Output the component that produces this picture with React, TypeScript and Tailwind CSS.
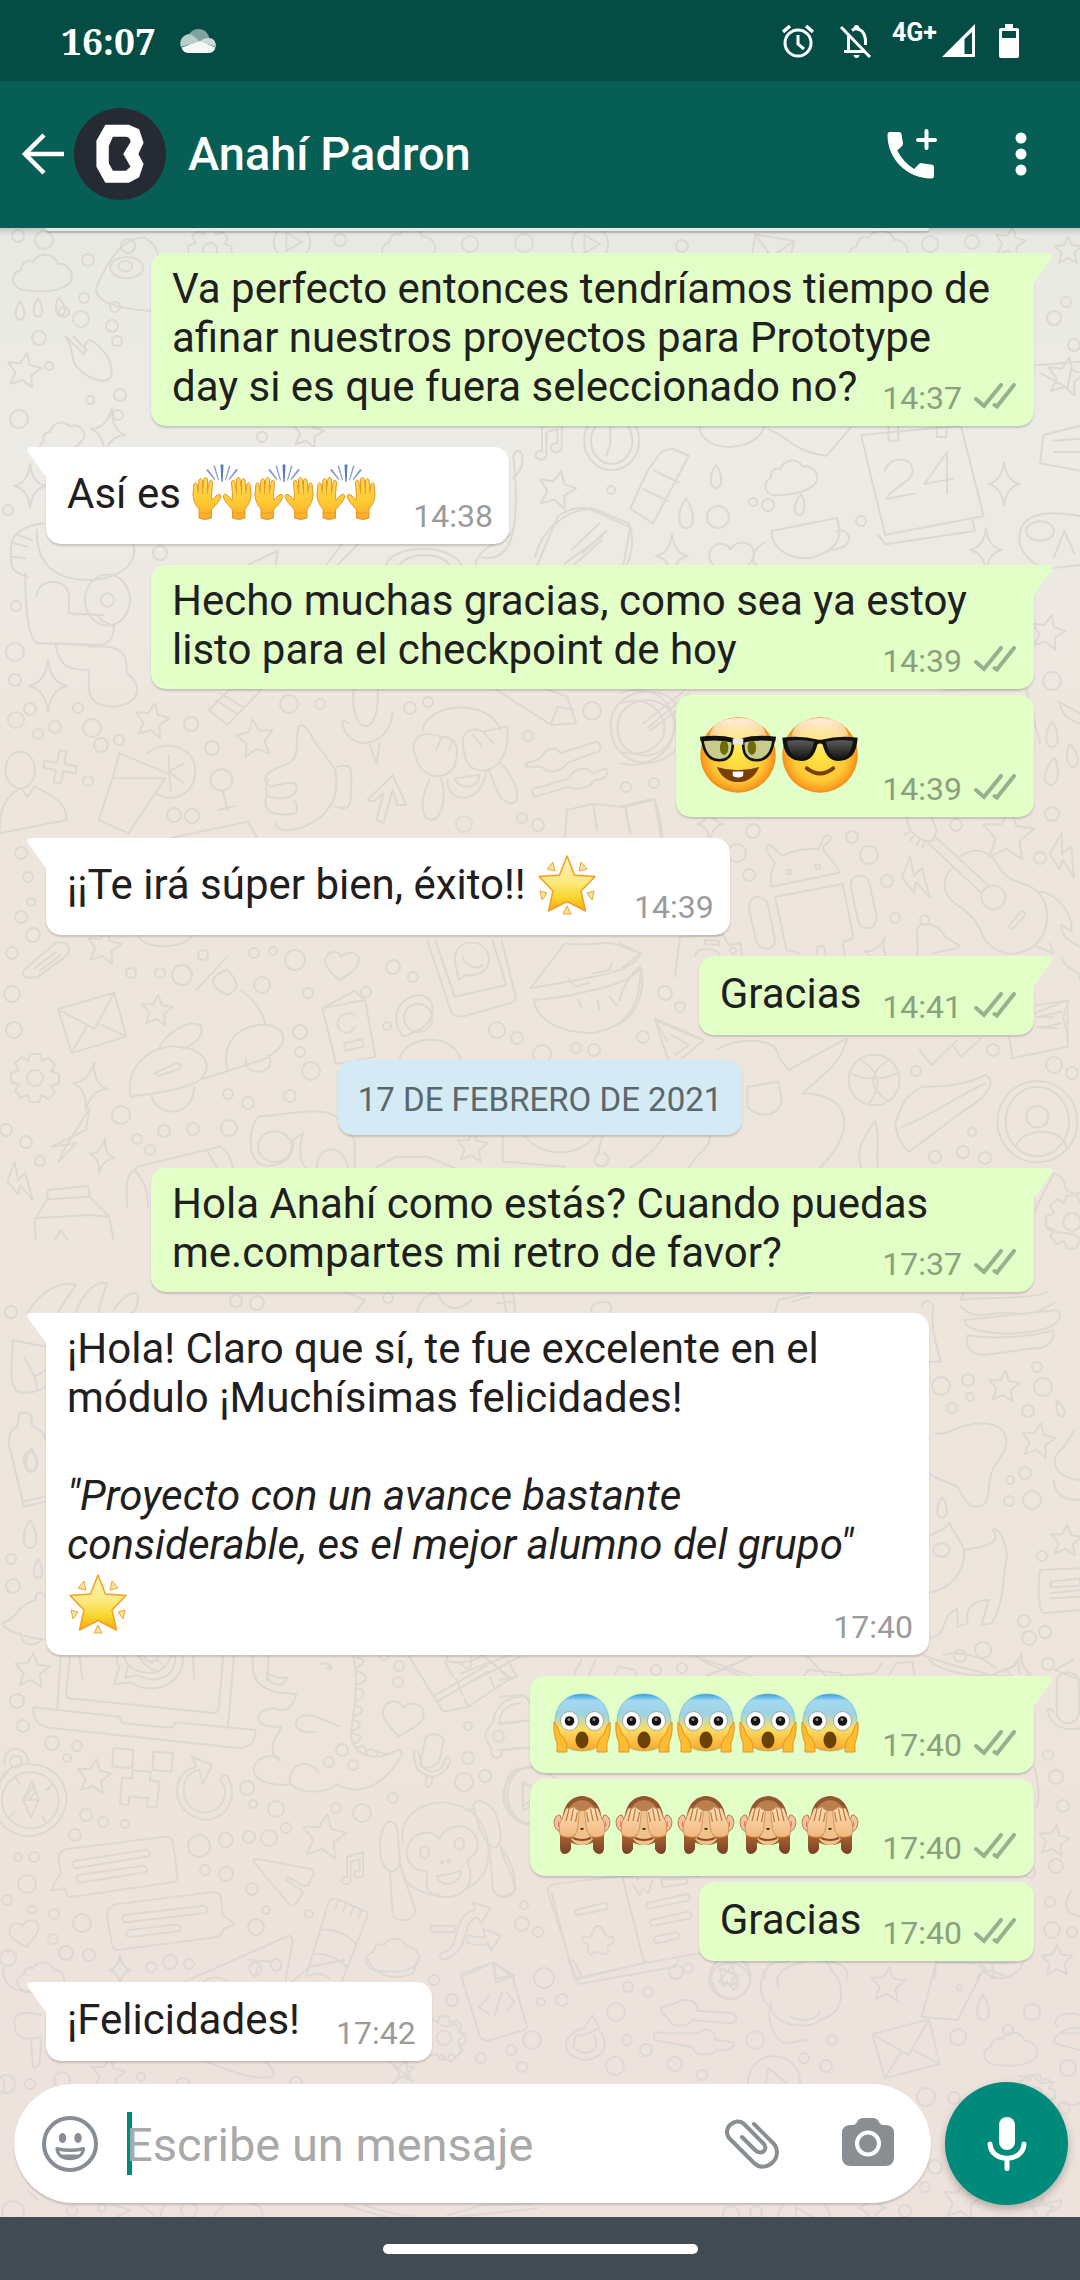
import type { ReactNode } from "react";

/* ---------- Wallpaper ---------- */

type Frame = [ox: number, oy: number, sx: number, sy: number];

const STAR = "M0 -17 L5 -6 L17 -5 L8 4 L11 16 L0 10 L-11 16 L-8 4 L-17 -5 L-5 -6Z";
const SPARK = "M0 -22 Q2 -3 16 0 Q2 3 0 22 Q-2 3 -16 0 Q-2 -3 0 -22Z";
const CLOUD = "M-20 16 C-34 14 -34 -2 -23 -4 C-22 -14 -14 -14 -11 -12 C-6 -22 10 -22 14 -10 C26 -12 34 6 22 12 C12 18 -6 18 -20 16Z";
const HEART = "M-4 17 C-12 8 -22 -2 -17 -10 C-12 -18 -2 -16 0 -9 C8 -17 20 -12 19 -3 C18 6 6 10 -4 17Z";
const DROP = "M0 -12 C6 -4 8 10 0 11 C-8 10 -6 -4 0 -12Z";
const BOLT = "M-6 -20 L-14 2 L-2 16 L0 6 L14 22 L6 -8 L-2 0Z";
const PLUS = "M-4 -18 H4 V-4 H18 V4 H4 V18 H-4 V4 H-18 V-4 H-4Z";
const NOTE = "M-6 14 a5 4 0 1 1 -4 -4 V-12 L8 -18 V6 a5 4 0 1 1 -4 -3 V-10 L-6 -7Z";
const GEAR = "M-5 -24 H5 L7 -17 L14 -20 L20 -13 L16 -7 L24 -4 V5 L16 8 L20 15 L13 21 L7 17 L4 24 H-5 L-7 17 L-14 20 L-20 13 L-16 7 L-24 4 V-5 L-16 -8 L-20 -15 L-13 -21 L-7 -17Z M8 0 A8 8 0 1 1 -8 0 A8 8 0 1 1 8 0Z";
const MAIL = "M-36 -18 L28 -30 L36 20 L-26 32Z M-36 -18 L2 8 L28 -30 M-26 32 L-6 4 M36 20 L8 3";
const PLAY = "M26 0 A26 26 0 1 1 -26 0 A26 26 0 1 1 26 0Z M-8 -13 L14 0 L-8 13Z";

const motifs: [string, number, number, number, number][] = [
  [CLOUD, 44, 274, 1, 0], [STAR, 24, 370, 1, 10], [SPARK, 108, 432, 1.1, 10], [CLOUD, 62, 438, 0.8, -20],
  [STAR, 308, 432, 0.9, 12], [STAR, 557, 489, 1.1, 14], [SPARK, 30, 486, 1, 0], [SPARK, 672, 556, 1, 0],
  [CLOUD, 792, 478, 0.9, -10], [DROP, 716, 477, 1, 0], [DROP, 800, 505, 0.9, 8], [DROP, 686, 514, 1.3, 0],
  [SPARK, 1004, 484, 1, 0], [SPARK, 986, 550, 1, 0], [NOTE, 553, 440, 1.1, 0], [HEART, 732, 560, 1.2, -10],
  [SPARK, 48, 686, 1.2, 0], [STAR, 152, 720, 1, 10], [STAR, 255, 738, 1.1, -8], [PLUS, 60, 767, 0.9, 10],
  [DROP, 20, 311, 0.8, 0], [DROP, 38, 308, 0.8, 0], [DROP, 60, 307, 0.8, -10], [STAR, 1048, 632, 1, 12],
  [STAR, 1008, 834, 1.5, 5], [BOLT, 916, 876, 1, 0], [BOLT, 1064, 854, 1, 10], [DROP, 1052, 735, 1.1, 0],
  [DROP, 1072, 756, 1, -12], [DROP, 1052, 772, 1.2, 10], [SPARK, 878, 956, 0.9, 20], [SPARK, 710, 824, 0.8, 0],
  [STAR, 104, 946, 1, 10], [STAR, 157, 1010, 0.9, 5], [HEART, 342, 965, 0.9, -5], [GEAR, 35, 1078, 1, 0],
  [SPARK, 90, 1086, 1.1, 10], [SPARK, 102, 1156, 0.8, 10], [MAIL, 92, 1022, 0.9, -6], [BOLT, 20, 1180, 0.9, 0],
  [STAR, 472, 1146, 0.9, 5], [STAR, 1004, 1386, 0.9, 6], [STAR, 1038, 1440, 1, 10], [STAR, 1066, 1540, 0.9, 5],
  [DROP, 1060, 1409, 0.7, -20], [DROP, 942, 1508, 0.9, 0], [DROP, 30, 1535, 1.2, 0], [DROP, 38, 1569, 0.8, 0],
  [DROP, 31, 1460, 1, 0], [STAR, 32, 1670, 1, 5], [STAR, 94, 1776, 1, 8], [STAR, 324, 1836, 1.3, 8],
  [HEART, 403, 1718, 1.1, 0], [HEART, 25, 1933, 0.8, -20], [CLOUD, 394, 1956, 0.9, 0], [CLOUD, 42, 1978, 0.8, 0],
  [NOTE, 356, 1868, 0.9, 0], [STAR, 1054, 1840, 0.9, 10], [STAR, 1057, 1960, 0.9, 0], [SPARK, 1018, 1672, 0.9, 10],
  [PLAY, 532, 1796, 1.1, 0], [STAR, 888, 1984, 1, 5], [CLOUD, 1012, 2050, 0.9, 0], [MAIL, 906, 2048, 0.9, -4],
  [GEAR, 444, 2038, 0.9, 0], [DROP, 983, 2008, 1.1, 0], [PLAY, 730, 1978, 0.8, 40], [STAR, 108, 2074, 1, 8],
  [GEAR, 1036, 2094, 0.8, 0], [SPARK, 872, 2208, 0.9, 0], [STAR, 962, 2200, 1.1, 8], [CLOUD, 240, 2212, 0.8, 0],
  [PLAY, 774, 2082, 1, 10], [PLAY, 804, 2220, 1, 0], [SPARK, 120, 1970, 0.7, 0], [STAR, 1042, 2210, 0.7, 0],
  [GEAR, 1072, 1222, 1.1, 0], [STAR, 404, 2070, 0.6, 0],
  [STAR, 1010, 242, 0.9, 12], [GEAR, 210, 250, 0.9, 0], [PLAY, 292, 242, 0.7, 0], [CLOUD, 410, 246, 0.9, 0],
  [PLAY, 590, 244, 0.7, 0], [MAIL, 772, 252, 0.6, 20], [CLOUD, 880, 250, 1, 0], [STAR, 1066, 376, 1.1, 10],
  [STAR, 1068, 250, 0.8, 0],
];

const dots: [number, number, number][] = [
  [18, 236, 6], [44, 240, 9], [88, 260, 6], [128, 246, 7], [340, 240, 6], [470, 244, 8], [524, 243, 9], [682, 246, 6], [930, 244, 8], [972, 242, 7],
  [84, 298, 5], [64, 312, 5], [81, 319, 8], [115, 307, 5], [112, 326, 6], [39, 338, 7], [117, 341, 5], [49, 366, 4], [120, 395, 6], [90, 400, 4], [19, 419, 9], [118, 415, 5],
  [1054, 318, 7], [1074, 345, 6], [1066, 302, 5], [8, 510, 5], [160, 553, 7], [262, 437, 5], [611, 490, 4], [753, 502, 4], [768, 505, 6], [718, 517, 11], [861, 521, 5],
  [16, 606, 5], [15, 652, 9], [15, 680, 6], [16, 720, 8], [55, 727, 6], [38, 734, 5], [92, 728, 9], [78, 708, 5], [30, 709, 6], [101, 745, 7], [119, 740, 5], [191, 724, 7], [212, 748, 7], [289, 704, 9], [320, 704, 5], [410, 708, 6], [428, 702, 5], [592, 711, 9], [528, 736, 5], [88, 781, 5],
  [174, 815, 7], [192, 816, 7], [464, 824, 8], [522, 818, 5], [538, 825, 6], [626, 787, 5], [654, 783, 5], [1052, 681, 9], [753, 831, 7], [737, 853, 9], [749, 875, 6], [852, 837, 6], [869, 855, 9], [887, 881, 6], [895, 918, 5], [956, 825, 6], [1040, 858, 6], [1052, 814, 7], [665, 993, 7], [680, 1007, 5],
  [21, 853, 6], [28, 877, 5], [31, 902, 4], [21, 917, 6], [33, 935, 7],
  [12, 953, 6], [12, 994, 8], [14, 1030, 8], [131, 973, 5], [160, 973, 5], [182, 975, 10], [262, 985, 8], [295, 960, 10], [203, 955, 5], [254, 953, 5], [273, 951, 4], [300, 1032, 7], [308, 993, 5], [366, 992, 5], [393, 967, 7], [413, 977, 5], [418, 1018, 14], [497, 1030, 8], [517, 1038, 6], [387, 1026, 4], [300, 1052, 5], [311, 1071, 9], [121, 1115, 9], [228, 1094, 5], [248, 1103, 6], [290, 1096, 6], [164, 1131, 6], [193, 1129, 6], [229, 1128, 8], [137, 1139, 5], [26, 1142, 6], [6, 1130, 6], [40, 1161, 5], [150, 1150, 5], [643, 1037, 6], [576, 1048, 5], [594, 1050, 6], [542, 1054, 9], [935, 1157, 6], [963, 1152, 6], [985, 1158, 6], [972, 1132, 4], [916, 1071, 5], [1054, 1065, 8], [1072, 1073, 6], [993, 1050, 6],
  [236, 1301, 6], [257, 1303, 7], [388, 1298, 5], [11, 1312, 6], [941, 1386, 9], [968, 1380, 6], [970, 1397, 4], [952, 1408, 5], [1028, 1411, 6], [1043, 1387, 9], [1037, 1367, 5], [1025, 1473, 6], [1009, 1501, 5], [1032, 1500, 9], [1010, 1480, 4], [1042, 1556, 5], [13, 1586, 7], [11, 1559, 5], [1024, 1621, 6], [1029, 1638, 7], [1045, 1632, 6], [983, 1650, 8], [960, 1656, 6],
  [17, 1701, 7], [23, 1726, 6], [52, 1743, 7], [77, 1746, 5], [67, 1758, 4], [86, 1815, 6], [103, 1822, 5], [125, 1824, 4], [75, 1835, 6], [18, 1857, 4], [34, 1857, 5], [27, 1884, 9], [7, 1900, 5], [32, 1910, 4], [54, 1914, 5], [82, 1923, 9], [53, 1939, 5], [8, 1958, 8], [66, 1953, 7], [89, 1955, 6], [151, 1967, 5], [170, 1962, 7], [189, 1964, 5], [199, 1846, 11], [226, 1840, 7], [249, 1837, 6], [269, 1838, 8], [286, 1828, 5], [276, 1809, 8], [253, 1804, 4], [247, 1788, 7], [205, 1870, 5], [226, 1874, 7], [252, 1889, 6], [256, 1927, 8], [266, 1910, 4], [309, 1914, 4], [336, 1808, 5], [362, 1813, 9], [393, 1798, 5], [329, 1762, 5], [342, 1750, 6], [353, 1765, 5], [464, 1782, 9], [468, 1758, 6], [485, 1776, 6], [468, 1726, 4], [398, 1682, 5], [399, 1666, 5], [384, 1656, 4], [434, 1980, 5],
  [656, 1670, 5], [682, 1668, 5], [1048, 1664, 6], [1048, 1755, 5], [1056, 1777, 7], [1063, 1806, 6], [1056, 1866, 7], [1050, 1902, 5], [1052, 1930, 8], [1072, 1932, 5], [524, 1905, 4], [522, 1924, 7], [538, 1932, 5], [676, 1972, 7], [688, 1968, 5],
  [452, 2000, 6], [544, 1978, 10], [628, 1987, 5], [648, 1992, 5], [541, 2002, 4], [562, 2000, 6], [532, 2040, 9], [511, 2050, 5], [522, 2067, 5], [481, 2058, 5], [616, 2012, 9], [627, 2040, 5], [646, 2050, 6], [615, 2066, 9], [675, 2064, 7], [702, 2075, 5], [755, 2040, 9], [832, 2040, 5], [958, 2037, 8], [1032, 2012, 8], [1068, 2068, 8], [1008, 2030, 5], [804, 2058, 5], [826, 2066, 6],
  [926, 2097, 9], [954, 2098, 6], [935, 2167, 7], [925, 2187, 5], [1064, 2108, 6], [905, 2211, 6], [756, 2212, 6], [731, 2214, 8], [30, 2084, 5], [62, 2080, 8], [6, 2084, 9], [141, 2077, 4], [13, 2212, 11], [72, 2211, 5], [102, 2208, 4], [189, 2210, 8], [183, 2085, 7], [296, 2083, 6],
];

const outlines: { frame: Frame; d: string[] }[] = [
  {
    frame: [0, 230, 0.6888, 0.3763],
    d: [
      "M140 150 C160 70 180 20 210 20 C230 40 235 80 228 120 M160 100 a24 28 0 1 0 48 0 a24 28 0 1 0 -48 0 M172 96 a10 14 0 1 0 20 0 a10 14 0 1 0 -20 0 M140 150 C135 190 170 210 219 215",
      "M95 282 C110 320 100 350 115 370 C130 400 165 420 162 370 C160 330 140 300 130 292 C120 300 125 320 122 330 M95 282 L122 330 M106 282 L126 320",
      "M848 560 a40 78 0 1 0 80 0 a40 78 0 1 0 -80 0 M858 560 a30 62 0 1 0 60 0 a30 62 0 1 0 -60 0 M886 520 V570 L880 600",
      "M975 580 L1000 600 L948 780 L915 740 L940 640 L960 590Z M950 640 L985 670 M935 690 L970 720",
      "M1250 545 L1395 520 L1428 760 L1285 810Z M1275 810 L1285 835 L1415 800 L1412 770 M1290 520 v40 l14 0 v-40 M1360 510 v40 l14 0 v-45",
      "M1285 640 C1290 600 1325 600 1325 640 C1325 670 1290 690 1287 715 L1328 700 M1375 700 V590 L1342 675 L1385 660",
      "M1120 800 L1215 765 C1225 820 1215 850 1180 870 C1150 880 1120 850 1120 800Z M1215 800 C1240 790 1240 850 1205 850 M1110 830 C1090 850 1090 890 1100 890",
      "M780 890 L810 760 C830 735 850 735 860 745 L915 790 L905 890 M830 850 L870 780 M845 860 L880 800",
      "M1480 820 C1480 760 1510 740 1568 760 M1490 800 a20 26 0 1 0 40 0 a20 26 0 1 0 -40 0 M1530 870 L1545 800 L1560 860 M1480 820 C1480 860 1500 890 1520 900 L1568 890",
      "M1568 520 L1515 545 L1510 620 L1568 640 M1530 560 L1568 555 M1530 590 L1568 590",
      "M1500 360 L1568 350 M1510 380 L1550 420 L1555 370",
      "M1015 521 C1020 600 1100 590 1110 521 M1115 530 C1140 540 1150 590 1200 600 L1235 525",
      "M690 890 C700 820 740 840 746 790 M700 870 C730 880 760 850 745 600 C755 560 770 620 745 660",
    ],
  },
  {
    frame: [0, 430, 0.4592, 0.3333],
    d: [
      "M80 300 C80 420 130 450 200 450 C280 440 300 380 290 345 M24 370 C20 320 40 290 95 280 M24 370 C20 420 35 430 60 440 M30 340 L60 350 M38 315 L70 330 M24 380 L56 385 M55 430 C55 520 60 640 85 640 L200 645",
      "M80 500 C80 440 150 440 150 500 V550 L225 555 M150 550 C180 560 215 540 220 570 L248 590 C250 630 230 650 200 645 L120 640",
      "M185 510 a48 75 0 1 0 98 0 a48 75 0 1 0 -98 0 M220 510 a14 20 0 1 0 28 0 a14 20 0 1 0 -28 0",
      "M120 640 C130 720 160 720 195 720 M195 650 C270 640 280 680 275 730 C310 760 310 820 250 830 C190 830 190 790 195 720",
      "M455 840 L500 778 L570 778 L495 885Z M470 810 L515 850 M480 790 L528 830",
      "M770 778 C760 920 830 930 822 778 M745 870 C750 970 850 960 855 845 M745 870 L760 880 M805 945 L820 1000 L827 940",
      "M1080 778 L1200 885 L1255 880 L1235 800 L1190 778 M1200 880 L1215 830 L1250 840",
      "M1330 900 C1320 760 1480 740 1490 880 C1490 1030 1340 1040 1330 900 M1345 900 C1340 790 1460 780 1470 880 C1470 1000 1350 1010 1345 900 M1410 895 L1500 790",
      "M650 890 C670 870 680 940 700 960 L730 1020 C740 1100 720 1130 700 1160 C650 1210 600 1210 600 1180 M650 890 C640 960 660 990 610 1010 C560 1040 580 1060 590 1070 C640 1050 650 1060 645 1080 C640 1110 600 1110 580 1095 C580 1050 580 1060 585 1050 M580 1100 C570 1150 600 1160 645 1150 C650 1120 640 1110 640 1110 M735 1010 C770 1000 765 1020 765 1060 C765 1140 760 1140 730 1130",
      "M245 1045 L360 1045 L280 1210 L215 1170 L245 1045 L260 970 L365 1030 M320 970 C370 920 430 960 425 1030 C420 1100 370 1120 340 1090 M368 1025 L368 975 M368 1025 L400 1000 M368 1025 L400 1060 M368 1025 L372 1080",
      "M458 1050 a24 32 0 1 0 48 0 a24 32 0 1 0 -48 0 M485 1080 L495 1140 M475 1140 L512 1128",
      "M0 1210 C-5 1130 20 1090 45 1075 L60 1100 L75 1070 C120 1100 145 1120 145 1170Z M12 1020 a32 55 0 1 0 64 0 a32 55 0 1 0 -64 0",
      "M800 1110 L855 1035 L885 1125 L865 1125 L855 1080 L835 1180 L820 1170 L835 1090 L815 1115Z",
      "M900 960 C900 900 940 910 960 920 C1000 920 1000 960 990 1010 C970 1050 930 1050 910 1000 L900 960 M1010 960 C1000 900 1030 890 1050 905 L1105 890 C1110 980 1080 1030 1040 1020 C1010 1010 1010 960 1010 960 M920 900 C930 820 1060 800 1090 900 M975 1050 C970 1120 1050 1130 1060 1020 M990 1045 L1045 1035 C1040 1080 1000 1080 990 1045 M935 1050 C910 1120 920 1170 940 1170 C960 1170 975 1100 960 1045 M1065 1020 C1080 1080 1090 1120 1115 1120 C1140 1110 1120 1040 1090 1000 M960 925 L950 960 M985 930 L978 960 M1030 915 L1050 950 M1055 910 L1075 940",
      "M1145 1010 C1140 990 1170 1000 1180 980 C1190 950 1215 950 1220 970 L1300 935 C1315 950 1305 970 1290 970 L1235 1000 C1220 1030 1190 1030 1180 1010Z M1165 1100 C1150 1080 1165 1070 1180 1070 L1240 1045 C1250 1010 1280 1010 1290 1030 L1320 1015 C1330 1040 1310 1050 1295 1050 C1280 1080 1250 1080 1240 1070Z",
      "M1230 1225 L1235 1140 L1290 1122 L1360 1132 L1425 1108 L1440 1225 M1292 1125 L1300 1200 M1362 1135 L1372 1210",
      "M370 1225 L540 1175 L560 1225 M300 1515 C310 1560 400 1560 420 1515",
      "M1165 380 C1180 300 1230 240 1290 235 L1370 280 C1380 320 1380 360 1365 405 M1230 400 L1310 320 M1250 405 L1310 330",
      "M840 405 C860 340 980 340 1005 405 M870 405 C890 365 960 365 980 405 M710 405 L745 342 M735 405 L780 342 M540 405 L605 362 L600 405",
    ],
  },
  {
    frame: [620, 680, 0.3333, 0.3333],
    d: [
      "M455 620 L658 578 C640 530 600 515 610 500 L632 480 C635 465 620 462 612 472 L595 508 C560 505 520 510 487 528 L455 498 C440 490 435 505 445 520 L465 548 C450 580 450 600 455 620Z M500 576 a7 7 0 1 0 14 0 a7 7 0 1 0 -14 0 M586 560 a7 7 0 1 0 14 0 a7 7 0 1 0 -14 0",
      "M465 650 L668 612 L700 770 C700 780 670 780 668 790 L675 828 M465 650 L500 810 L540 820 M590 828 L592 800 L612 798 L618 828",
      "M388 690 C380 640 440 640 445 680 L465 780 C465 815 415 815 408 780Z M692 620 C690 580 740 575 748 610 L770 710 C770 755 720 755 714 720Z",
      "M1020 530 C1060 500 1110 510 1130 550 C1160 610 1200 600 1240 625 C1300 670 1290 760 1240 800 C1180 840 1120 820 1090 770 C1060 700 1040 700 1000 665 C960 630 970 590 1000 562 M1084 652 a36 36 0 1 0 72 0 a36 36 0 1 0 -72 0 M945 470 L1110 620 M925 490 L1085 640 M1170 735 L1200 697 C1210 690 1218 700 1212 710 L1182 742 C1170 750 1165 742 1170 735Z",
      "M860 412 L870 450 C900 480 920 490 940 480 L950 450 L935 412 M852 465 l14 -8 M870 482 l10 -12 M890 495 l8 -14 M908 502 l6 -14",
      "M890 825 C900 790 880 750 900 735 C930 725 960 740 975 770 L1020 798 C1000 815 960 810 940 822 M900 720 a14 14 0 1 0 28 0 a14 14 0 1 0 -28 0",
      "M165 890 L180 770 L310 765 L325 795 L362 790 L365 828 M225 828 C230 800 290 800 300 828 M255 780 L295 782 L298 795 L255 792Z M330 812 a9 9 0 1 0 18 0 a9 9 0 1 0 -18 0",
      "M105 1020 L235 1075 M105 1020 L140 1080 M0 790 L60 820 L0 870 M0 1030 C60 1000 80 900 60 860 C30 880 0 940 0 960",
      "M1260 635 C1310 640 1360 700 1355 755 L1325 735 C1320 770 1360 790 1380 800 M1290 790 L1300 820 L1250 800 M1325 830 C1340 880 1380 860 1380 900",
      "M1250 975 L1345 962 L1330 1010 L1345 1080 M1250 1010 L1300 1012 M1250 1040 L1310 1045",
      "M0 40 C100 0 180 80 160 160 C150 220 80 270 0 250 M0 70 C80 40 150 100 130 170 C100 220 50 230 0 215 M70 130 L190 35 M90 152 L165 95 M0 380 L95 357 C110 360 125 420 125 475 M18 390 L22 410 M25 430 L32 455",
      "M970 30 L1200 28 M1220 30 L1260 190 M1315 65 L1380 100 M1320 75 C1330 110 1350 120 1380 130",
    ],
  },
  {
    frame: [0, 940, 0.6888, 0.3333],
    d: [
      "M35 90 L80 10 C100 0 105 30 95 50 L55 110 C35 120 30 105 35 90Z M50 85 L82 35 M58 92 L88 45",
      "M285 150 L330 50 M330 90 C345 120 350 150 330 165 C305 140 300 110 330 90 M350 150 C370 180 380 210 385 250 M190 470 C180 380 220 310 260 320 C300 330 310 380 290 420 C270 450 220 460 190 470Z M230 330 C240 280 270 240 290 255 C300 280 280 320 265 325 M330 390 C320 300 350 250 390 255 C420 270 420 320 380 360 L290 420 M225 400 L255 370 C265 370 265 385 255 390 L230 408Z M358 355 a18 30 0 1 0 30 -10 M220 465 C225 530 280 540 282 440",
      "M468 205 L515 152 L530 180 L545 350 L488 372Z M468 205 L530 180 M490 250 C490 220 515 210 515 230 M515 260 C510 290 490 280 490 250 M500 310 L525 298 L528 320 L500 332Z",
      "M585 290 C550 190 620 120 628 200 C630 260 600 280 585 290",
      "M620 0 L655 215 C658 230 665 232 675 228 L740 190 C748 185 750 175 748 165 L728 0 M632 0 L660 170 L735 135 L715 0 M660 60 C660 -10 710 -10 710 60 C710 100 685 110 675 105 L666 120 Z M672 50 C675 80 695 90 700 75",
      "M770 145 L820 10 C850 20 870 5 890 10 L930 40 C920 100 860 110 770 145 M775 180 C780 260 840 290 870 275 C920 250 930 170 930 85 C910 130 890 130 875 145 C850 150 840 170 775 180 M825 115 L835 140 L855 130 M862 100 L885 90 L888 70 M840 180 L845 205 M868 180 L870 210 M885 170 L895 195",
      "M950 235 L1022 300 L990 355 M950 235 L970 358 M975 285 L1000 315 L980 345",
      "M580 358 C590 280 660 280 668 358 M1040 330 C1070 290 1130 290 1130 350 L1145 390 L1230 295 C1220 380 1190 410 1165 460 C1230 460 1250 560 1190 684 M1085 440 L1130 425 L1135 480 C1130 540 1095 530 1085 500Z M1250 680 C1240 620 1260 580 1270 540 C1280 600 1270 640 1275 684",
      "M1232 420 a37 76 0 1 0 74 0 a37 76 0 1 0 -74 0 M1250 360 C1280 400 1280 440 1262 490 M1290 360 C1260 400 1260 440 1290 485 M1235 400 C1265 430 1290 410 1305 400",
      "M1300 550 C1310 480 1320 460 1340 440 C1360 440 1400 440 1430 405 C1450 420 1430 480 1400 510 L1320 635 C1310 620 1300 580 1300 550Z M1310 560 C1340 540 1380 480 1430 430",
      "M1448 545 a58 122 0 1 0 116 0 a58 122 0 1 0 -116 0 M1460 545 a46 104 0 1 0 92 0 a46 104 0 1 0 -92 0 M1490 530 a16 32 0 1 0 32 0 a16 32 0 1 0 -32 0 M1475 620 C1485 560 1540 560 1548 620",
      "M375 530 L440 515 C470 510 490 520 495 550 L515 600 V684 M375 530 C360 570 360 640 375 670 C400 690 430 660 425 600 L440 580 C430 640 440 680 445 684 M375 620 a24 46 0 1 0 48 0 a24 46 0 1 0 -48 0 M460 684 C460 610 500 610 505 684",
      "M185 800 C180 700 190 700 200 680 L320 620 C335 640 335 660 338 684 M300 630 L315 684 M195 690 C210 720 215 760 215 800",
      "M70 750 L128 738 L130 770 L158 830 L165 900 M70 750 L68 780 L50 840 L52 900 M50 835 L130 825 L158 830 M130 770 L68 778 M80 900 L88 870 L98 900",
      "M730 585 V665 L820 680 M760 585 C790 660 840 650 865 585 M875 585 L868 640 M870 640 a10 20 0 1 0 6 0",
      "M1385 320 L1395 350 L1425 295 M1335 330 L1352 375 L1390 300 M1465 290 L1470 355 L1550 320 V180 L1502 220 M1510 230 L1540 215 M1510 265 L1540 250",
      "M1500 820 L1530 700 C1560 720 1530 760 1568 760 M1520 840 C1510 900 1560 860 1568 900",
      "M915 684 C950 640 960 600 965 585 M1000 684 C1010 640 1035 620 1030 585 M545 684 L575 650 H620 L660 684 M90 640 L130 505 L125 570 L75 620 L110 610 L85 665Z",
    ],
  },
  {
    frame: [0, 1280, 0.6888, 0.3333],
    d: [
      "M40 98 C60 30 90 0 110 15 C100 50 90 70 85 98 M110 98 C120 40 140 0 155 10 C150 50 140 90 145 98 M165 90 C180 40 205 20 200 60 C200 80 195 98 190 98",
      "M605 98 C610 60 620 40 635 40 C640 60 650 98 670 80 L685 60 M730 36 L735 98 M745 36 L748 98 M720 70 L748 66 M500 36 L530 60 L515 98 M860 98 C850 60 900 50 885 98 M1125 98 L1130 60 L1180 36 M1150 65 L1175 50",
      "M1395 60 L1400 36 M1395 60 C1420 50 1500 60 1520 36 M1395 80 C1420 130 1440 90 1470 100 C1500 110 1520 80 1530 70 M1400 120 L1535 90 C1545 110 1535 140 1510 150 C1470 170 1400 160 1400 120Z M1405 165 C1440 180 1500 170 1530 150 C1530 190 1520 205 1500 205 L1430 225 C1410 225 1400 200 1405 165Z",
      "M1338 80 C1340 55 1355 60 1355 85 C1350 140 1360 200 1366 245 L1348 245",
      "M1358 460 C1380 470 1385 430 1430 430 C1470 440 1465 500 1450 540 C1430 590 1440 640 1430 670 C1410 700 1400 660 1390 620 C1370 600 1350 590 1350 580",
      "M1348 770 C1360 750 1370 755 1378 730 L1390 770 L1400 810 C1430 800 1450 790 1445 760 L1440 750 C1450 740 1460 780 1462 830 C1455 880 1460 960 1440 1030 L1425 1035 L1435 960 C1415 960 1400 980 1405 1030 L1390 1040 V985 C1360 1020 1380 1060 1350 1075 M1355 810 a12 20 0 1 0 24 0 a12 20 0 1 0 -24 0 M1345 940 C1370 930 1400 900 1400 810",
      "M1568 600 C1530 590 1520 540 1545 500 L1560 450 M1530 600 C1530 650 1550 660 1568 660 M1568 865 L1510 870 C1505 940 1510 1000 1515 1000 L1568 990 M1525 905 L1568 895 V918 L1525 922Z M1525 940 L1568 930 M1525 955 L1568 950",
      "M18 180 C20 240 10 300 25 335 C40 345 60 330 66 320 M18 180 L66 200 M35 230 L50 290 L66 270 M50 290 L55 330",
      "M25 440 L28 400 C35 395 45 400 45 410 L47 440 C60 450 64 460 66 480 M25 440 C10 450 12 500 15 510 L35 680 L66 665 M32 665 L66 650 M35 550 C30 510 50 500 55 545 C55 580 40 590 35 550",
      "M66 950 C60 930 50 935 52 960 C20 980 30 1010 3 1030 C10 1060 50 1075 66 1080 M30 1060 C32 1100 50 1100 60 1080",
      "M115 1125 L120 1200 M180 1125 C180 1170 220 1200 240 1160 L250 1125 M200 1125 C210 1150 230 1150 230 1125 M280 1125 L282 1200 M390 1125 L388 1200 M470 1150 C485 1150 480 1170 475 1165 M650 1125 C640 1160 690 1150 700 1125 M670 1180 L740 1125 M690 1200 L755 1130 M700 1125 L745 1200 M1010 1130 L1095 1190 M1090 1130 L1015 1200 M1170 1125 L1200 1190 L1270 1180 L1280 1150 M1340 1125 C1380 1160 1440 1180 1460 1200 M1370 1125 C1390 1110 1430 1130 1445 1165",
    ],
  },
  {
    frame: [0, 1655, 0.3333, 0.3333],
    d: [
      "M182 0 L172 162 M210 0 L198 118 Q198 128 208 130 L640 174 Q654 174 656 160 L670 0 M702 0 L684 214 M100 157 L358 185 Q362 205 376 205 L508 218 Q524 218 524 202 L767 225 Q765 280 715 279 L148 218 Q98 210 100 157Z",
      "M352 0 Q345 15 358 35 L342 88 L392 82 C460 130 560 80 548 0 M370 0 L385 32 L376 68 L412 60 C460 90 530 70 526 0 M412 0 C430 30 470 60 485 42 C498 30 480 18 465 15 L455 25 C440 18 435 5 430 0",
      "M760 0 C745 90 800 118 888 116 C885 150 860 170 840 165 C800 150 770 180 775 192 C780 215 815 215 842 216 C840 240 810 250 820 298 L840 318 M838 310 C800 290 755 320 762 350 C775 390 850 395 870 386 C865 320 930 310 954 350 M870 386 C900 420 980 415 1012 388 C1090 430 1160 380 1205 300 Q1205 280 1190 286 C1140 320 1060 310 1053 240 C1060 160 1080 90 1060 0 M1018 214 L950 186 C890 165 870 215 905 228 Q930 236 948 230 M800 54 Q830 72 862 68 C850 100 805 95 800 54 M962 26 Q985 20 996 42",
      "M1070 10 Q1110 10 1070 40 M1072 48 Q1125 70 1072 88 M1070 98 Q1115 115 1066 140 M1064 150 Q1112 165 1060 185 M1058 192 Q1105 210 1053 230 M1056 236 Q1108 240 1060 268 M1068 280 Q1100 260 1098 300 M1100 290 Q1120 270 1134 304 M1130 286 Q1145 300 1168 296",
      "M340 280 L400 284 L396 340 L337 334Z M460 290 L520 294 L514 350 L458 345Z M398 346 L452 350 L450 376 L478 380 L470 457 L440 455 L444 430 L388 424 L386 450 L360 446 L366 368 L396 370Z",
      "M574 304 L636 330 L608 388 L598 344 C555 350 540 400 560 440 C590 495 680 480 676 400 L663 378 C658 362 678 355 685 368 C710 420 690 480 630 494 C560 500 510 430 540 370 C550 350 570 340 590 336Z",
      "M0 400 C-10 360 40 320 92 328 C160 330 200 380 200 436 C190 510 130 550 70 542 C30 535 0 510 -10 480 M6 436 a85 84 0 1 0 170 0 a85 84 0 1 0 -170 0 M96 378 L116 434 L92 490 L70 434Z M70 434 H116 M78 425 L102 392 M90 430 L108 408 M14 330 C5 260 90 270 84 328 M30 320 a18 18 0 1 0 36 0 a18 18 0 1 0 -36 0 M46 366 L58 384 M158 388 L140 404 M44 470 L24 488 M126 484 L138 504 M25 350 L0 380",
      "M176 620 Q170 590 200 582 L490 546 Q518 542 520 570 L533 665 Q533 680 518 682 L212 726 Q198 726 196 702 L156 706 Q158 690 182 656Z M222 618 L440 584 Q458 592 446 604 L226 640 Q208 632 222 618Z M234 660 L430 632 Q450 640 436 652 L240 683 Q222 678 234 660Z",
      "M322 790 Q318 755 350 748 L640 711 Q662 710 664 735 L668 780 L705 808 L670 822 Q668 842 650 846 L356 885 Q340 888 336 868Z M372 780 L612 752 Q630 762 618 774 L378 802 Q358 796 372 780Z M384 826 L532 808 Q550 818 538 828 L390 847 Q370 842 384 826Z",
      "M762 622 Q758 608 775 612 L935 643 Q945 648 940 660 L925 690 Q918 696 905 690 L862 665 L858 675 L902 704 Q912 712 904 722 L885 750 Q874 756 866 746Z",
      "M1260 330 L1276 250 C1285 230 1335 235 1330 262 L1320 310 C1310 345 1270 340 1260 330 M1242 295 C1240 360 1290 370 1310 362 C1345 350 1360 310 1345 305 C1330 300 1340 350 1295 350 C1255 345 1262 300 1255 293 Q1245 285 1242 295Z M1280 362 L1278 390 Q1285 402 1293 390 L1298 364",
      "M1210 565 C1190 480 1280 430 1350 445 C1430 460 1460 510 1466 580 C1470 650 1440 680 1395 703 C1370 735 1300 735 1282 700 C1275 680 1285 660 1280 648 C1230 650 1210 600 1225 570 C1240 530 1300 520 1318 553 C1340 500 1420 500 1432 560 C1440 600 1400 610 1402 620 C1420 660 1410 690 1395 703 M1310 664 Q1345 660 1382 648 C1385 690 1320 700 1310 664 M1260 592 a14 18 0 1 0 28 0 a14 18 0 1 0 -28 0 M1364 566 a14 18 0 1 0 28 0 a14 18 0 1 0 -28 0 M1322 622 a4 4 0 1 0 8 0 a4 4 0 1 0 -8 0 M1342 619 a4 4 0 1 0 8 0 a4 4 0 1 0 -8 0",
      "M1170 648 C1130 640 1130 510 1170 500 C1200 500 1190 540 1200 610 C1200 640 1190 650 1170 648 L1178 780 C1190 805 1240 800 1246 770 C1240 720 1210 690 1200 620 M1210 660 C1220 700 1290 725 1320 718 M1420 450 C1430 425 1480 440 1495 500 C1510 550 1500 575 1480 578 C1450 560 1430 500 1420 450 M1470 585 L1478 700 C1485 735 1540 735 1545 700 C1540 660 1510 620 1502 576 M1395 466 L1425 462",
      "M985 745 Q990 728 1010 732 L1095 768 Q1106 774 1102 785 L1025 980 M985 745 L918 965 M1016 738 L1006 762 M1040 745 L1028 772 M1062 754 L1050 780 M1086 764 L1074 790 M965 824 Q1020 820 1066 864 M945 896 Q1000 895 1040 936 M918 965 Q960 945 990 972",
      "M555 980 L862 844 Q878 840 878 860 L856 980 M748 942 a18 20 0 1 0 36 0 a18 20 0 1 0 -36 0 M812 930 a16 17 0 1 0 32 0 a16 17 0 1 0 -32 0 M610 980 Q645 955 682 980",
      "M1325 894 C1390 880 1350 780 1425 765 L1418 742 L1472 760 L1444 804 L1434 788 C1380 790 1420 890 1330 914 Q1312 905 1325 894Z M1296 812 L1368 812 L1362 832 L1300 832 Q1284 822 1296 812 M1405 840 Q1430 850 1456 846 L1450 822 L1502 842 L1474 886 L1464 866 Q1430 876 1400 862Z M1385 965 L1482 922 L1542 962 V990 M1482 922 L1488 972 L1542 960 M1385 965 L1390 990",
      "M1225 0 L1324 162 Q1328 172 1340 168 L1405 156 L1510 84 L1552 60 M1300 124 L1460 32 M1312 140 L1465 48 M1335 20 L1358 62 M1368 72 L1388 122 M1394 134 L1404 156 M1470 68 L1482 96 M1368 20 L1410 45 L1415 0 M1475 20 L1530 75",
      "M1560 125 C1490 130 1480 190 1478 205 C1450 230 1450 250 1475 280 C1470 305 1490 320 1504 300 L1506 285 L1560 280 M1560 145 C1500 150 1500 190 1498 208 L1560 202 M1480 244 a16 16 0 1 0 32 0 a16 16 0 1 0 -32 0 M1560 340 C1500 350 1500 470 1560 500",
    ],
  },
  {
    frame: [500, 1660, 0.3699, 0.3333],
    d: [
      "M130 700 Q125 680 145 672 L330 648 L390 910 L205 955Z M140 700 L200 955 M205 960 L400 905 M335 650 C420 640 500 640 540 650 M390 910 L540 880 M205 750 L285 728 Q298 738 286 748 L210 766 Q195 758 205 750Z M400 728 L505 702 Q520 710 508 722 L402 746 Q388 740 400 728Z M408 780 L510 755 Q525 762 512 776 L412 798 Q398 792 408 780Z M420 830 L475 816 Q492 822 480 836 L425 850 Q410 845 420 830Z M360 675 L378 705 L386 685 L402 700 L412 660 M372 660 L372 655 M435 660 L500 655 Q515 665 500 672 L440 682Z",
      "M225 830 Q250 840 250 815 Q265 780 282 815 Q285 835 305 830 Q315 850 290 858 Q300 890 275 880 Q260 870 245 885 Q230 870 240 855 Q215 845 225 830Z",
      "M85 320 C0 320 0 490 85 490 M60 370 L85 380 M60 370 V440 L85 420 M0 110 L60 105 Q90 120 90 180 M0 190 L85 180 M0 270 L85 262 M0 560 C30 600 50 660 35 700 L0 712 M1445 320 Q1465 420 1450 440 M1420 648 Q1450 670 1445 620 M1545 690 Q1520 730 1540 760 L1568 770",
      "M1505 60 C1510 30 1560 30 1565 60 V160 C1560 200 1510 200 1505 160Z M1480 145 C1485 200 1530 215 1568 205 M1478 150 Q1490 140 1495 155 M1550 0 L1500 30 L1568 60 M1385 50 L1330 45 L1385 20 L1400 0 L1405 40 M1050 50 L1070 10 L1115 5 L1120 45 M820 50 L835 30 L920 40 L930 48 M0 60 L45 50 L20 0 M200 45 L220 0 M240 48 L258 0 M310 48 L320 20 L365 30 L370 48 M545 0 L600 30 L660 0 M560 45 L605 25 L650 48 M1160 0 Q1210 50 1330 45",
      "M565 955 C575 900 660 890 675 955 M715 955 C720 910 730 905 780 904 M850 904 C920 900 940 920 940 955 M600 925 L640 945 M1175 955 L1180 908 L1390 910 M1290 955 Q1300 915 1370 950 M1300 910 L1330 955 M1330 908 L1335 955 M1465 890 Q1500 880 1500 870",
    ],
  },
  {
    frame: [0, 1960, 0.6888, 0.3333],
    d: [
      "M670 50 Q668 38 678 35 L715 8 L744 50 L765 200 Q765 212 752 215 L708 242 Q698 240 696 225Z M715 8 L720 68 L744 50 M710 110 L695 142 L710 162 M735 98 L747 125 L738 150 M728 100 L718 165",
      "M860 165 L870 205 L842 230 C835 210 835 240 832 260 C850 300 875 270 862 225 M860 165 L848 205 C815 220 810 290 850 300 C885 290 880 240 872 215",
      "M960 155 C955 135 975 140 985 125 C1000 110 1015 130 1012 152 L1065 160 C1072 175 1070 190 1058 190 L1005 180 C1000 200 975 205 972 180Z M950 240 C945 215 960 215 965 220 L1015 220 C1025 195 1040 215 1038 238 L1065 248 C1068 265 1055 275 1040 268 C1035 290 1010 290 1005 262Z",
      "M1033 50 a28 68 0 1 0 56 0 a28 68 0 1 0 -56 0 M1045 25 L1050 80 L1055 65 L1065 90 L1070 80 L1062 55 L1072 48Z",
      "M1110 30 C1100 80 1105 130 1120 140 C1120 200 1180 210 1190 180 C1210 170 1225 140 1220 80 C1220 50 1200 20 1200 0 M1120 130 C1110 180 1125 240 1140 250 L1172 240 M1148 170 C1165 190 1185 180 1190 155 M1170 5 C1130 20 1125 50 1130 80",
      "M825 0 L840 72 L980 20 L985 0 M832 0 L845 50 M1360 0 L1338 170 L1390 180 L1430 20 M1392 75 a4 8 0 1 0 2 0 M1420 0 C1425 60 1470 80 1485 10",
      "M1535 200 C1525 180 1540 150 1568 165 M1530 250 C1530 210 1568 190 1568 210 M1530 250 L1568 270 M1543 220 L1568 220",
      "M360 0 L395 5 M370 50 L375 20 M415 80 L450 20 L500 0 M535 0 C540 30 560 70 600 40 L605 0 M5 20 C0 90 40 110 66 90 M22 200 C15 160 35 150 60 165 M22 200 C20 240 45 240 60 230 M45 240 L48 320 Q55 330 58 300 L60 240",
      "M300 304 C340 340 370 360 395 350 C400 340 395 320 385 304 M565 304 L592 348 L590 304 M570 370 L582 350 L600 365 M640 195 L650 200 L660 190 L672 225 L665 245 L672 270 L655 305 L640 285",
      "M0 350 Q10 360 5 400 M1480 350 L1500 345 L1510 370 L1530 365 M1540 430 Q1560 440 1568 430 M1500 740 L1540 720 Q1545 740 1520 760 M650 765 L700 735 L770 733 M665 770 L780 745 M500 735 Q540 760 560 770 M530 735 Q560 760 600 770 M165 735 L190 750 L170 770 M205 735 L225 768 M40 690 L55 720 M240 735 Q230 760 235 770",
    ],
  },
];

function Wallpaper() {
  return (
    <svg
      aria-hidden="true"
      viewBox="0 228 1080 1989"
      preserveAspectRatio="xMidYMin slice"
      className="absolute inset-0 h-full w-full [&_*]:[vector-effect:non-scaling-stroke]"
    >
      <defs>
        <linearGradient id="paper" x1="0" y1="0" x2="0" y2="1">
          <stop offset="0" stopColor="#e9e9e4" />
          <stop offset="0.12" stopColor="#edebe6" />
          <stop offset="0.26" stopColor="#eee6dd" />
          <stop offset="0.7" stopColor="#eee5dc" />
          <stop offset="1" stopColor="#ede2dc" />
        </linearGradient>
      </defs>
      <rect x="0" y="228" width="1080" height="1989" fill="url(#paper)" />
      <g fill="none" stroke="#ddd9d2" strokeWidth="2" strokeLinejoin="round" strokeLinecap="round">
        {outlines.map(({ frame: [ox, oy, sx, sy], d }, i) => (
          <g key={i} transform={`translate(${ox} ${oy}) scale(${sx} ${sy})`}>
            {d.map((p, j) => (
              <path key={j} d={p} />
            ))}
          </g>
        ))}
        {motifs.map(([d, x, y, s, r], i) => (
          <path key={i} d={d} transform={`translate(${x} ${y}) rotate(${r}) scale(${s})`} />
        ))}
        {dots.map(([x, y, r], i) => (
          <circle key={i} cx={x} cy={y} r={r} />
        ))}
      </g>
    </svg>
  );
}

/* ---------- Emoji ---------- */

function EmojiDefs() {
  return (
    <svg aria-hidden="true" className="absolute h-0 w-0">
      <defs>
        <linearGradient id="skin" x1="0" y1="0" x2="0" y2="1">
          <stop offset="0" stopColor="#ffdb55" />
          <stop offset="0.6" stopColor="#ffc832" />
          <stop offset="1" stopColor="#f9a928" />
        </linearGradient>
        <radialGradient id="face" cx="0.5" cy="0.5" r="0.5">
          <stop offset="0" stopColor="#fde84a" />
          <stop offset="0.7" stopColor="#fdc934" />
          <stop offset="0.92" stopColor="#fb9f22" />
          <stop offset="1" stopColor="#f38a14" />
        </radialGradient>
        <linearGradient id="shine" x1="0" y1="0" x2="0" y2="1">
          <stop offset="0" stopColor="#fff" stopOpacity="0.85" />
          <stop offset="1" stopColor="#fff" stopOpacity="0.1" />
        </linearGradient>
        <linearGradient id="lens" x1="0" y1="0" x2="0" y2="1">
          <stop offset="0" stopColor="#5a5a58" />
          <stop offset="1" stopColor="#171717" />
        </linearGradient>
        <linearGradient id="star" x1="0" y1="0" x2="0" y2="1">
          <stop offset="0" stopColor="#fff3c4" />
          <stop offset="0.5" stopColor="#fbe878" />
          <stop offset="0.75" stopColor="#f9d62c" />
          <stop offset="1" stopColor="#f8a71c" />
        </linearGradient>
        <linearGradient id="fear" x1="0" y1="0" x2="0" y2="1">
          <stop offset="0" stopColor="#2f9fe0" />
          <stop offset="0.12" stopColor="#a5d8f0" />
          <stop offset="0.35" stopColor="#9dd3e6" />
          <stop offset="0.6" stopColor="#f7df68" />
          <stop offset="1" stopColor="#fca728" />
        </linearGradient>
        <linearGradient id="arm" x1="0" y1="0" x2="0" y2="1">
          <stop offset="0" stopColor="#b8682c" />
          <stop offset="1" stopColor="#74402a" />
        </linearGradient>
        <linearGradient id="palm" x1="0" y1="0" x2="0" y2="1">
          <stop offset="0" stopColor="#ffe0b8" />
          <stop offset="1" stopColor="#f1b77c" />
        </linearGradient>
      </defs>
    </svg>
  );
}

function Hand() {
  return (
    <g stroke="#e8962a" strokeWidth="1" strokeLinejoin="round">
      <path
        fill="url(#skin)"
        d="M8 55 V46 C4 42 2 36 2 31 L3 21 Q4.500 18 6 21 L7 28 L8 17 Q9.500 14 11.500 17 V27 L13 15.500 Q15 13 16.500 16 V28 L18.500 18 Q20.500 16 21.500 19 L20.500 33 L21 37 L26 32 Q29 30 30 33 C28 40 24 42 20.500 47 V55 Q14 58 8 55Z"
      />
      <path fill="none" strokeWidth="0.800" d="M7.200 28 V31 M11.500 27 V31 M16.500 27 V31 M8 50 H20" />
    </g>
  );
}

function RaisedHands() {
  return (
    <>
      <g fill="#5b79bd">
        <path d="M29.500 2 Q31 0.500 32.500 2 L31.600 19 H30.400Z" />
        <path opacity="0.700" d="M22.500 3 L24 2.500 L28 17 L27 17.500Z M39.500 3 L38 2.500 L34 17 L35 17.500Z" />
        <path opacity="0.700" d="M15 7 L17 6 L24.500 16 L23.500 17Z M47 7 L45 6 L37.500 16 L38.500 17Z" />
      </g>
      <Hand />
      <g transform="translate(62 0) scale(-1 1)">
        <Hand />
      </g>
    </>
  );
}

function GlowingStar() {
  return (
    <>
      <path
        fill="url(#star)"
        stroke="#f3a01e"
        strokeWidth="1.500"
        strokeLinejoin="round"
        d="M31 2 L38.500 21 L59 22.500 L45 37 L49.500 57 L31 47.500 L12.500 57 L17 37 L3 22.500 L23.500 21Z"
      />
      <g fill="#fbe29a" stroke="#e9a53c" strokeWidth="1" strokeLinejoin="round">
        <path d="M17 8 L19 17 L11 15Z M45 8 L43 17 L51 15Z M4 37 L11 39 L6 46Z M58 37 L51 39 L56 46Z M31 52 L35 60 H27Z" />
      </g>
    </>
  );
}

function Ball() {
  return (
    <>
      <circle cx="31" cy="31" r="28.500" fill="url(#face)" />
      <ellipse cx="31" cy="16" rx="21" ry="13" fill="url(#shine)" />
    </>
  );
}

function Nerd() {
  return (
    <>
      <Ball />
      <path d="M15 40 Q31 45 47 40 Q42 51.500 31 51.500 Q20 51.500 15 40Z" fill="#7a3f06" />
      <path d="M27 43.500 H35 V46 Q35 48 31 48 Q27 48 27 46Z" fill="#fff" />
      <path fill="#c9cb8c" stroke="#141414" strokeWidth="2" d="M4 19.500 Q14 17.500 27 20 Q28 35 17 35 Q6 35 4 19.500Z M58 19.500 Q48 17.500 35 20 Q34 35 45 35 Q56 35 58 19.500Z" />
      <path stroke="#111" strokeWidth="3.500" d="M2.500 19 Q16 17 28 20 M59.500 19 Q46 17 34 20" fill="none" />
      <path d="M27 18.500 H35 V23.500 Q31 21.500 27 23.500Z" fill="#e8e8e8" />
      <ellipse cx="20.500" cy="25.500" rx="3.200" ry="5.500" fill="#6f6a0c" />
      <ellipse cx="41.500" cy="25.500" rx="3.200" ry="5.500" fill="#6f6a0c" />
    </>
  );
}

function Cool() {
  return (
    <>
      <Ball />
      <path d="M21 41 Q31 49 41 41" stroke="#7a3f06" strokeWidth="3" strokeLinecap="round" fill="none" />
      <path d="M2.500 18 Q16 16 30 19.500 H32 Q46 16 59.500 18 L59 22 Q57 35.500 45 35.500 Q36 35.500 33 23 Q31 21.500 29 23 Q26 35.500 17 35.500 Q5 35.500 3 22Z" fill="#111" />
      <path d="M6 20.500 Q16 18.500 26.500 21 Q24 33.500 17 33.500 Q8 33.500 6 20.500Z M56 20.500 Q46 18.500 35.500 21 Q38 33.500 45 33.500 Q54 33.500 56 20.500Z" fill="url(#lens)" />
    </>
  );
}

function Scream() {
  return (
    <>
      <path d="M31 2 C47 2 57 13 58 28 C58 46 50 59 31 59 C12 59 4 46 4 28 C5 13 15 2 31 2Z" fill="url(#fear)" stroke="#3c9dd0" strokeOpacity="0.450" strokeWidth="1" />
      <path d="M3 30 Q7 34 9 42 Q14 46 16 53 V60 H6 V51 Q2 42 3 30Z M59 30 Q55 34 53 42 Q48 46 46 53 V60 H56 V51 Q60 42 59 30Z" fill="#fdbd30" stroke="#ec9220" strokeWidth="1" />
      <g fill="#fff" stroke="#9c9a94" strokeWidth="0.800">
        <ellipse cx="18.500" cy="29" rx="9" ry="9.500" />
        <ellipse cx="43.500" cy="29" rx="9" ry="9.500" />
      </g>
      <circle cx="18.500" cy="29" r="4.800" fill="#161311" />
      <circle cx="43.500" cy="29" r="4.800" fill="#161311" />
      <circle cx="18" cy="27.500" r="1.500" fill="#8b8884" />
      <circle cx="43" cy="27.500" r="1.500" fill="#8b8884" />
      <ellipse cx="31" cy="48" rx="6.500" ry="8.500" fill="#6a4205" />
    </>
  );
}

function Monkey() {
  const side = (
    <g>
      <path d="M9 37 H20 V54 Q18 59 13 59 Q9 58 9 53Z" fill="url(#arm)" />
      <path d="M9 20 C1 20 1 35 10 37 L12 28Z" fill="#f4c49a" stroke="#b8764a" strokeWidth="1" />
      <path d="M8 25 Q5 30 9 34Z" fill="#e4787c" />
      <path d="M9 40 Q7 29 11 24 L15 14 Q17 12 18 14 L21 12.500 Q23 11 24 13.500 L27 15 Q29 16 28 20 L26.500 34 Q24 42 20 42 Q14 43 9 40Z" fill="url(#palm)" stroke="#c98a55" strokeWidth="0.800" />
      <path d="M15 26 L18 14 M20 26 L22.500 13.500 M24.500 27 L26.500 17" stroke="#b87740" strokeWidth="1.200" fill="none" />
    </g>
  );
  return (
    <>
      <path d="M31 1 C46 2 51 15 51 30 C51 43 43 50 31 50 C19 50 11 43 11 30 C11 15 16 2 31 1Z" fill="#93552d" />
      <path d="M31 5 Q42 6 45 16 L31 18 L17 16 Q20 6 31 5Z" fill="#bb7f4d" />
      <path d="M27 16 H35 L38 40 L42 44 Q38 50 31 50 Q24 50 20 44 L24 40Z" fill="#f0c28c" />
      <path d="M22 43 Q31 47 40 43" stroke="#8d4a22" strokeWidth="2" fill="none" />
      <path d="M29 33 H33 L32 35 H30Z" fill="#5c3520" />
      {side}
      <g transform="translate(62 0) scale(-1 1)">{side}</g>
    </>
  );
}

const EMOJI = {
  "🙌": RaisedHands,
  "🌟": GlowingStar,
  "🤓": Nerd,
  "😎": Cool,
  "😱": Scream,
  "🙈": Monkey,
};

function Emoji({ char, large = false }: { char: keyof typeof EMOJI; large?: boolean }) {
  const Drawing = EMOJI[char];
  return (
    <svg
      role="img"
      aria-label={char}
      viewBox="0 0 62 62"
      className={large ? "inline-block size-[82px]" : "inline-block size-[62px] align-[-17px]"}
    >
      <Drawing />
    </svg>
  );
}

/* ---------- Messages ---------- */

function Checks() {
  return (
    <svg role="img" aria-label="Entregado" viewBox="0 0 42 26" className="mb-[3px] h-[26px] w-[42px]">
      <g fill="none" stroke="#99b08f" strokeWidth="4" strokeLinecap="round" strokeLinejoin="miter">
        <path d="M2 16 L10 23 L27 2" />
        <path d="M20.500 22 L23 23.500 L40 2" />
      </g>
    </svg>
  );
}

type BubbleProps = {
  from: "me" | "them";
  time: string;
  tail?: boolean;
  body?: "line" | "emoji" | "large" | "block" | "mixed";
  children: ReactNode;
};

function Bubble({ from, time, tail = true, body = "line", children }: BubbleProps) {
  const mine = from === "me";
  const wide = body === "block" || body === "mixed";
  const padding = {
    line: "pt-[13px] pb-[17px]",
    emoji: "pt-4 pb-[19px]",
    large: "pt-[19px] pb-[21px]",
    block: "pt-[11px] pb-[15px]",
    mixed: "pt-[11px] pb-5",
  }[body];
  return (
    <article
      className={`relative grid rounded-[15px] pl-[21px] shadow-[0_2px_2px_rgba(0,0,0,0.16)] ${
        mine ? "self-end bg-[#e1ffc7]" : "self-start bg-white"
      } ${tail ? (mine ? "mt-[21px] rounded-tr-none" : "mt-[21px] rounded-tl-none") : "mt-1.5"} ${
        wide ? "w-full max-w-[883px] grid-cols-1" : "grid-cols-[auto_auto]"
      }`}
    >
      {tail && (
        <svg
          aria-hidden="true"
          viewBox="0 0 20 30"
          className={`absolute top-0 h-[30px] w-5 ${mine ? "-right-[19px]" : "-left-[19px] -scale-x-100"}`}
        >
          <path d="M0 0 H17 Q21 1 19 5 L1 30 H0Z" fill={mine ? "#e1ffc7" : "#fff"} />
        </svg>
      )}
      <div className={`text-[42px] leading-[49px] text-[#1f201e] ${padding} ${wide ? "col-start-1 row-start-1 pr-9" : ""}`}>
        {children}
      </div>
      <footer
        className={`flex items-end gap-3 self-end ${mine ? "pr-[18px]" : "pr-4"} pb-[14px] ${
          wide ? "col-start-1 row-start-1 justify-self-end" : mine ? "pl-[21px]" : "pl-9"
        }`}
      >
        <time className={`text-[32px] leading-7 ${mine ? "text-[#8ba07d]" : "text-[#9b9b9b]"}`}>{time}</time>
        {mine && <Checks />}
      </footer>
    </article>
  );
}

/* ---------- Screen ---------- */

function StatusBar() {
  return (
    <div className="flex h-[81px] items-center bg-[#054d44] pr-[61px] pl-[61px] text-white">
      <span className="font-['Noto_Serif','Liberation_Serif',serif] text-[37px] leading-[48px] font-bold">16:07</span>
      <svg aria-hidden="true" viewBox="0 0 36 24" className="ml-6 h-6 w-9">
        <circle cx="18.500" cy="11" r="11" fill="#7fa49f" />
        <path d="M9 5 A9.500 9.500 0 0 0 1 18 L19 12.500 Q14 6 9 5Z" fill="#b9cecb" />
        <path d="M28.500 9 Q23 9 20 12.500 L36 18 Q36 9 28.500 9Z" fill="#cbdbd9" />
        <path d="M1.500 18.500 L20 12 L35.500 18.500 Q34 24 28 24 H9 Q3 24 1.500 18.500Z" fill="#f3f7f6" />
      </svg>
      <svg aria-hidden="true" viewBox="0 0 32 34" className="ml-auto h-[34px] w-8" fill="none" stroke="#fff">
        <circle cx="16" cy="19" r="13" strokeWidth="3" />
        <path d="M16 11 V20 L22 25" strokeWidth="3" />
        <path d="M1 8 L8 2 M31 8 L24 2" strokeWidth="3.500" />
      </svg>
      <svg aria-hidden="true" viewBox="0 0 33 34" className="ml-[25px] h-[34px] w-[33px]" fill="none" stroke="#fff" strokeWidth="3">
        <path d="M9.500 12 V27 M5 27.500 H25 M13 6.500 Q16 4 18 5 C25 6 27 12 26.500 21" />
        <path d="M2 3 L31 33" />
        <path d="M14.500 5 Q14.500 1 17.500 1 Q20.500 1 20.500 5Z M14.500 31 H20.500 Q20 34 17.500 34 Q15 34 14.500 31Z" fill="#fff" stroke="none" />
      </svg>
      <span className="mb-4 ml-5 text-[25px] leading-6 font-bold">4G+</span>
      <svg aria-hidden="true" viewBox="0 0 33 33" className="ml-[5px] h-[33px] w-[33px]">
        <path d="M33 0 V33 H0Z M30 8 L22.500 15 V30 H30Z" fill="#fff" fillRule="evenodd" />
      </svg>
      <svg aria-hidden="true" viewBox="0 0 20 34" className="ml-6 h-[34px] w-5">
        <path d="M6 0 H14 V4 H18 Q20 4 20 6 V32 Q20 34 18 34 H2 Q0 34 0 32 V6 Q0 4 2 4 H6Z M3 7 V14 H17 V7Z" fill="#fff" fillRule="evenodd" />
      </svg>
    </div>
  );
}

function ChatHeader() {
  return (
    <header className="flex h-[147px] items-center bg-[#075e54] pr-12 pb-0.5 pl-[22px] text-white">
      <button type="button" aria-label="Atrás" className="flex items-center gap-[10px]">
        <svg aria-hidden="true" viewBox="0 0 42 42" className="size-[42px]" fill="none" stroke="#fff" strokeWidth="4.500">
          <path d="M22 2 L3 21 L22 40 M3 21 H42" />
        </svg>
        <svg aria-hidden="true" viewBox="215 324 267 276" preserveAspectRatio="none" className="size-[92px] rounded-full bg-[#262a33]">
          <path
            fill="#fff"
            fillRule="evenodd"
            d="M306 374 H374 L404 388 L417 428 L402 462 L417 492 L404 532 L374 548 H306 L280 500 V422Z M328 410 L316 438 V490 L328 512 H366 L379 500 L358 462 L379 426 Q379 412 366 410Z"
          />
        </svg>
      </button>
      <h1 className="ml-[22px] flex-1 text-[47px] leading-14 font-medium">Anahí Padron</h1>
      <button type="button" aria-label="Llamar">
        <svg aria-hidden="true" viewBox="0 0 50 50" className="size-[50px]" fill="#fff">
          <path d="M3 3 H12 Q14.500 3 14.700 5.500 Q15 10 16 13.500 Q16.300 15.500 15 17 L10.300 21.500 Q16 33 27 40 L32 35 Q33.500 33.700 35.300 34.200 Q39 35.300 44.500 35.500 Q47 35.700 47 38 V47 Q47 49.500 44 49.500 C20 49.500 0.500 30 0.500 6 Q0.500 3 3 3Z" />
          <path d="M39.500 0 Q41.500 0 41.500 2 V9 H48 Q50 9 50 11 Q50 13 48 13 H41.500 V19 Q41.500 21 39.500 21 Q37.500 21 37.500 19 V13 H31 Q29 13 29 11 Q29 9 31 9 H37.500 V2 Q37.500 0 39.500 0Z" />
        </svg>
      </button>
      <button type="button" aria-label="Más opciones" className="ml-[73px]">
        <svg aria-hidden="true" viewBox="0 0 22 44" className="h-11 w-[22px]" fill="#fff">
          <circle cx="11" cy="6" r="5.500" />
          <circle cx="11" cy="22" r="5.500" />
          <circle cx="11" cy="38" r="5.500" />
        </svg>
      </button>
    </header>
  );
}

function Composer() {
  return (
    <form className="relative flex items-center gap-[14px] pt-[21px] pr-3 pb-3 pl-[14px]">
      <div className="flex h-[119px] min-w-0 flex-1 items-center rounded-full bg-white pr-[37px] pl-7 shadow-[0_2px_2px_rgba(0,0,0,0.16)]">
        <button type="button" aria-label="Emojis">
          <svg aria-hidden="true" viewBox="0 0 56 56" className="size-14" fill="#868d94">
            <circle cx="28" cy="28" r="26" fill="none" stroke="#868d94" strokeWidth="4" />
            <ellipse cx="20.500" cy="22" rx="3.700" ry="5" />
            <ellipse cx="36" cy="22" rx="3.700" ry="5" />
            <path fillRule="evenodd" d="M15 31 Q28 34 41 31 Q43.500 31 43 33 C42 48 14 48 13.500 33 Q13 31 15 31Z M17 35 Q18.500 38.500 20 38.500 H36 Q38 38.500 39.500 35 Q28 37 17 35Z" />
          </svg>
        </button>
        <span aria-hidden="true" className="ml-[29px] h-[63px] w-[5px] bg-[#008a7c]" />
        <input
          type="text"
          aria-label="Mensaje"
          placeholder="Escribe un mensaje"
          className="-ml-[6px] h-[67px] min-w-0 flex-1 bg-transparent pt-1 text-[47px] text-[#1f201e] outline-none placeholder:text-[#a9a9a9]"
        />
        <button type="button" aria-label="Adjuntar">
          <svg aria-hidden="true" viewBox="0 0 54 50" className="h-[50px] w-[54px]" fill="none" stroke="#888e92" strokeWidth="4" strokeLinecap="round" strokeLinejoin="round">
            <path d="M29 5 L48 24 C53 29 53.500 37 48 43 C42 49 34 49 29 44 L5 20 C1 16 1 10 5 6 C9 2 15 1 19 5 L38 24 C41 27 41 30 39 32 C37 34 33 34 30 31 L17 18" />
          </svg>
        </button>
        <button type="button" aria-label="Cámara" className="mb-1 ml-[63px]">
          <svg aria-hidden="true" viewBox="0 0 52 48" className="h-12 w-[52px]">
            <path
              d="M21 0 H31 Q35 0 37 4 L38.500 6 Q39.500 7 41 7 H43 Q52 7 52 15 V39 Q52 48 43 48 H9 Q0 48 0 39 V15 Q0 7 9 7 H11 Q12.500 7 13.500 6 L15 4 Q17 0 21 0Z"
              fill="#888e92"
            />
            <circle cx="26" cy="25.500" r="11" fill="#888e92" stroke="#fff" strokeWidth="4" />
          </svg>
        </button>
      </div>
      <button
        type="button"
        aria-label="Grabar mensaje de voz"
        className="grid size-[123px] shrink-0 place-items-center rounded-full bg-[#008a7b] shadow-[0_4px_8px_rgba(0,0,0,0.25)]"
      >
        <svg aria-hidden="true" viewBox="0 0 40 54" className="h-[54px] w-10">
          <rect x="12" y="0" width="16" height="33" rx="8" fill="#fff" />
          <path d="M3 27 C4 46 36 46 37 27" fill="none" stroke="#fff" strokeWidth="5" strokeLinecap="round" />
          <path d="M20 43 V51.500" stroke="#fff" strokeWidth="5" strokeLinecap="round" />
        </svg>
      </button>
    </form>
  );
}

export default function App() {
  return (
    <div className="flex min-h-screen flex-col bg-[#eee5dc] font-['Roboto','Noto_Sans',sans-serif]">
      <EmojiDefs />
      <StatusBar />
      <ChatHeader />
      <div className="relative flex flex-1 flex-col justify-between overflow-hidden">
        <Wallpaper />
        <div aria-hidden="true" className="absolute inset-x-0 top-0 h-2 bg-linear-to-b from-black/15 to-transparent" />
        <main className="relative flex flex-col pr-[46px] pl-[46px]">
          <div className="mb-px h-[3px] w-full max-w-[883px] rounded-b-[15px] bg-[#e9e9e9] shadow-[0_2px_1px_rgba(0,0,0,0.16)]" />
          <Bubble from="me" time="14:37" body="block">
            Va perfecto entonces tendríamos tiempo de afinar nuestros proyectos para Prototype day si es que fuera seleccionado no?
          </Bubble>
          <Bubble from="them" time="14:38" body="emoji">
            Así es <Emoji char="🙌" />
            <Emoji char="🙌" />
            <Emoji char="🙌" />
          </Bubble>
          <Bubble from="me" time="14:39" body="block">
            Hecho muchas gracias, como sea ya estoy listo para el checkpoint de hoy
          </Bubble>
          <Bubble from="me" time="14:39" tail={false} body="large">
            <div className="flex">
              <Emoji char="🤓" large />
              <Emoji char="😎" large />
            </div>
          </Bubble>
          <Bubble from="them" time="14:39" body="emoji">
            ¡¡Te irá súper bien, éxito!! <Emoji char="🌟" />
          </Bubble>
          <Bubble from="me" time="14:41">Gracias</Bubble>
          <h2 className="mt-[25px] mb-3 self-center rounded-[15px] bg-[#d4eaf4] px-5 pt-[18px] pb-[14px] text-[33px] leading-[43px] font-normal text-[#5b676b] shadow-[0_2px_2px_rgba(0,0,0,0.16)]">
            17 DE FEBRERO DE 2021
          </h2>
          <Bubble from="me" time="17:37" body="block">
            Hola Anahí como estás? Cuando puedas me.compartes mi retro de favor?
          </Bubble>
          <Bubble from="them" time="17:40" body="mixed">
            <p>¡Hola! Claro que sí, te fue excelente en el módulo ¡Muchísimas felicidades!</p>
            <p className="mt-[49px] italic">"Proyecto con un avance bastante considerable, es el mejor alumno del grupo"</p>
            <p className="mt-1">
              <Emoji char="🌟" />
            </p>
          </Bubble>
          <Bubble from="me" time="17:40" body="emoji">
            <Emoji char="😱" />
            <Emoji char="😱" />
            <Emoji char="😱" />
            <Emoji char="😱" />
            <Emoji char="😱" />
          </Bubble>
          <Bubble from="me" time="17:40" tail={false} body="emoji">
            <Emoji char="🙈" />
            <Emoji char="🙈" />
            <Emoji char="🙈" />
            <Emoji char="🙈" />
            <Emoji char="🙈" />
          </Bubble>
          <Bubble from="me" time="17:40" tail={false}>Gracias</Bubble>
          <Bubble from="them" time="17:42">¡Felicidades!</Bubble>
        </main>
        <Composer />
      </div>
      <nav aria-label="Sistema" className="relative flex h-[63px] shrink-0 justify-center bg-[#434c52] pt-[27px]">
        <button type="button" aria-label="Inicio" className="h-[10px] w-[315px] rounded-full bg-white" />
      </nav>
    </div>
  );
}
